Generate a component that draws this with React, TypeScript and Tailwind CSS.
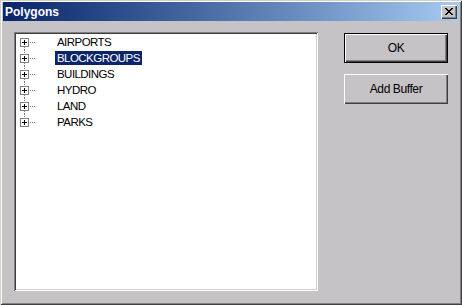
import React from "react";

const layers = ["AIRPORTS", "BLOCKGROUPS", "BUILDINGS", "HYDRO", "LAND", "PARKS"];

function TreeNode({ first, last }: { first: boolean; last: boolean }) {
  // plus box with dotted connectors, drawn like the win32 tree view
  return (
    <svg width="39" height="16" viewBox="0 0 39 16" className="shrink-0" shapeRendering="crispEdges">
      {!first && <line x1="8.5" y1="0" x2="8.5" y2="4" stroke="#808080" strokeDasharray="1 1" />}
      {!last && <line x1="8.5" y1="13" x2="8.5" y2="16" stroke="#808080" strokeDasharray="1 1" />}
      <line x1="14" y1="8.5" x2="20" y2="8.5" stroke="#808080" strokeDasharray="1 1" />
      <rect x="4.5" y="4.5" width="8" height="8" fill="#fff" stroke="#808080" />
      <line x1="6" y1="8.5" x2="11" y2="8.5" stroke="#000" />
      <line x1="8.5" y1="6" x2="8.5" y2="11" stroke="#000" />
    </svg>
  );
}

function Win2kButton({ label, isDefault }: { label: string; isDefault?: boolean }) {
  return (
    <button
      className={
        "w-[104px] h-[30px] bg-[#c6c3c6] text-[12px] tracking-[-0.4px] text-black font-['Liberation_Sans',sans-serif] " +
        (isDefault
          ? "border border-black shadow-[inset_1px_1px_#fff,inset_-1px_-1px_#404040,inset_-2px_-2px_#808080]"
          : "shadow-[inset_1px_1px_#fff,inset_-1px_-1px_#404040,inset_-2px_-2px_#808080]")
      }
    >
      {label}
    </button>
  );
}

export default function App() {
  return (
    <div className="w-[462px] h-[305px] bg-[#c6c3c6] flex flex-col pt-[2px] pl-[3px] pr-[3px] pb-[4px] shadow-[inset_1px_1px_#d4d0c8,inset_-1px_-1px_#404040,inset_2px_2px_#fff,inset_-2px_-2px_#808080] font-['Liberation_Sans',sans-serif]">
      <div className="h-[19px] flex items-center justify-between pl-[2px] pr-[2px] bg-gradient-to-r from-[#0a246a] to-[#a6caf0]">
        <span className="text-white font-bold text-[12px] leading-none">Polygons</span>
        <div className="w-[16px] h-[14px] bg-[#c6c3c6] flex items-center justify-center shadow-[inset_1px_1px_#fff,inset_-1px_-1px_#404040,inset_-2px_-2px_#808080]">
          <svg width="8" height="7" viewBox="0 0 8 7" shapeRendering="crispEdges">
            <path d="M0 0h2v1h-2zM6 0h2v1h-2zM1 1h2v1h-2zM5 1h2v1h-2zM2 2h4v1h-4zM3 3h2v1h-2zM2 4h4v1h-4zM1 5h2v1h-2zM5 5h2v1h-2zM0 6h2v1h-2zM6 6h2v1h-2z" fill="#000" />
          </svg>
        </div>
      </div>
      <div className="flex-1 flex pt-[11px] pl-[11px] pr-[11px] pb-[10px] gap-[26px]">
        <div className="w-[304px] bg-white shadow-[inset_1px_1px_#808080,inset_-1px_-1px_#fff,inset_2px_2px_#404040,inset_-2px_-2px_#d4d0c8] pt-[2px] pl-[2px]">
          {layers.map((name, i) => (
            <div key={name} className="h-[16px] flex items-center">
              <TreeNode first={i === 0} last={i === layers.length - 1} />
              <span
                className={
                  "h-[14px] leading-[14px] px-[2px] text-[11.5px] tracking-[-0.55px] " +
                  (name === "BLOCKGROUPS" ? "bg-[#0a246a] text-white" : "text-black")
                }
              >
                {name}
              </span>
            </div>
          ))}
        </div>
        <div className="flex flex-col gap-[11px] pt-[1px]">
          <Win2kButton label="OK" isDefault />
          <Win2kButton label="Add Buffer" />
        </div>
      </div>
    </div>
  );
}
